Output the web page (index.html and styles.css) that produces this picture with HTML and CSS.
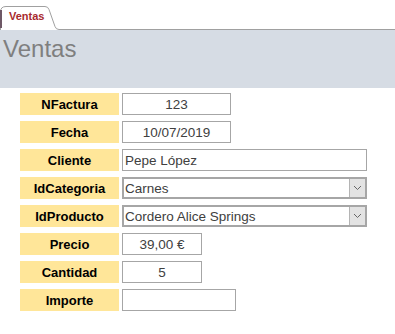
FILE: index.html
```html
<!DOCTYPE html>
<html lang="es">
<head>
    <meta charset="UTF-8">
    <meta name="viewport" content="width=device-width, initial-scale=1.0">
    <title>Ventas</title>
    <link rel="stylesheet" href="styles.css">
</head>
<body>

<!-- Pestaña del formulario -->
<div class="tabbar">
    <div class="tab">
        <svg class="tab-shape" width="60" height="30" viewBox="0 0 60 30">
            <path d="M0.5 30 L0.5 12 Q0.5 6.5 6 6.5 L45 6.5 Q48 6.5 49 9.5 L55 26.5 Q56 29.5 59 29.5 L60 29.5"
                  fill="#fff" stroke="#a0a0a0" stroke-width="1"/>
            <rect x="0" y="10" width="2" height="18" fill="#6e5866"/>
        </svg>
        <span class="tab-label">Ventas</span>
    </div>
    <div class="tab-rest"></div>
</div>

<!-- Encabezado -->
<div class="header">
    <h1 class="title">Ventas</h1>
</div>

<!-- Campos -->
<div class="form">
    <div class="row">
        <div class="label">NFactura</div>
        <div class="field field-short center">123</div>
    </div>
    <div class="row">
        <div class="label">Fecha</div>
        <div class="field field-short center">10/07/2019</div>
    </div>
    <div class="row">
        <div class="label">Cliente</div>
        <div class="field field-wide">Pepe López</div>
    </div>
    <div class="row">
        <div class="label">IdCategoria</div>
        <div class="combo">
            <span class="combo-text">Carnes</span>
            <span class="combo-btn">
                <svg width="9" height="6" viewBox="0 0 9 6"><polyline points="1,1 4.5,4.5 8,1" fill="none" stroke="#666" stroke-width="1"/></svg>
            </span>
        </div>
    </div>
    <div class="row">
        <div class="label">IdProducto</div>
        <div class="combo">
            <span class="combo-text">Cordero Alice Springs</span>
            <span class="combo-btn">
                <svg width="9" height="6" viewBox="0 0 9 6"><polyline points="1,1 4.5,4.5 8,1" fill="none" stroke="#666" stroke-width="1"/></svg>
            </span>
        </div>
    </div>
    <div class="row">
        <div class="label">Precio</div>
        <div class="field field-num center">39,00 €</div>
    </div>
    <div class="row">
        <div class="label">Cantidad</div>
        <div class="field field-num center">5</div>
    </div>
    <div class="row">
        <div class="label">Importe</div>
        <div class="field field-total"></div>
    </div>
</div>

</body>
</html>
```

FILE: styles.css
```css
body {
    font-family: 'Liberation Sans', Arial, sans-serif;
    background-color: #fff;
    margin: 0;
    padding: 0;
}

.tabbar {
    display: flex;
    height: 30px;
}

.tab {
    position: relative;
    width: 60px;
    height: 30px;
}

.tab-shape {
    position: absolute;
    top: 0;
    left: 0;
}

.tab-label {
    position: absolute;
    top: 10px;
    left: 9px;
    font-size: 11px;
    line-height: 13px;
    font-weight: bold;
    color: #a82a2e;
}

.tab-rest {
    flex: 1;
    height: 29px;
    border-bottom: 1px solid #a0a0a0;
}

.header {
    background-color: #d6dce4;
    height: 58px;
    box-sizing: border-box;
    padding: 5px 0 0 3px;
}

.title {
    margin: 0;
    font-size: 24px;
    line-height: 28px;
    font-weight: normal;
    color: #7f7f7f;
}

.form {
    display: flex;
    flex-direction: column;
    gap: 6px;
    padding: 5px 0 0 20px;
}

.row {
    display: flex;
    gap: 3px;
    height: 22px;
}

.label {
    width: 99px;
    background-color: #ffe699;
    display: flex;
    align-items: center;
    justify-content: center;
    font-size: 13px;
    font-weight: bold;
    color: #000;
}

.field {
    box-sizing: border-box;
    height: 22px;
    border: 1px solid #a6a6a6;
    display: flex;
    align-items: center;
    padding: 0 2px;
    font-size: 13.5px;
    color: #404040;
}

.center {
    justify-content: center;
}

.field-short {
    width: 109px;
}

.field-wide {
    width: 245px;
}

.field-num {
    width: 80px;
}

.field-total {
    width: 114px;
}

.combo {
    box-sizing: border-box;
    width: 245px;
    height: 22px;
    border: 2px solid #a6a6a6;
    display: flex;
    font-size: 13.5px;
    color: #404040;
}

.combo-text {
    flex: 1;
    display: flex;
    align-items: center;
    padding-left: 1px;
}

.combo-btn {
    width: 15px;
    background-color: #e3e3e3;
    border-left: 1px solid #b4b4b4;
    display: flex;
    align-items: center;
    justify-content: center;
}
```
